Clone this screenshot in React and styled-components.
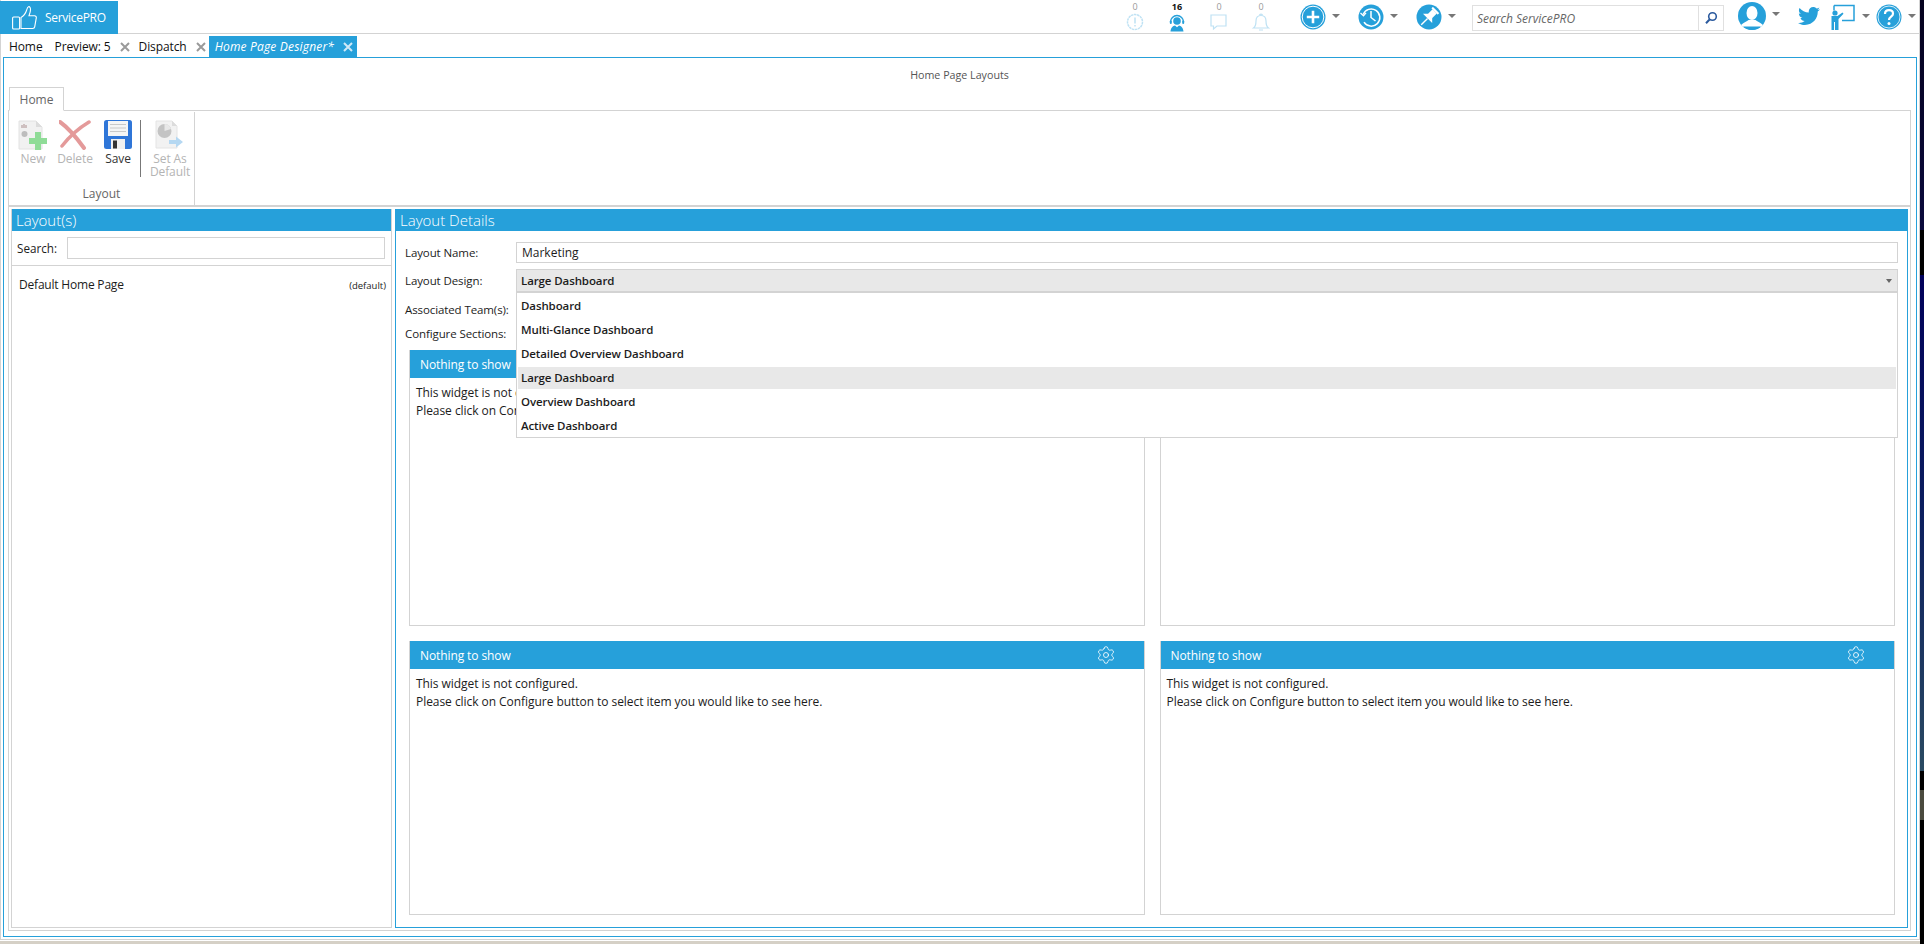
import React from "react";
import styled, { createGlobalStyle } from "styled-components";
import { Settings } from "lucide-react";
import { FaTwitter } from "react-icons/fa";

const BLUE = "#26a0da";
const GREY = "#d3d3d3";
const FONT = `"Open Sans", "Noto Sans", "Liberation Sans", sans-serif`;

const Global = createGlobalStyle`
  html, body { margin: 0; padding: 0; background: #000; }
  * { box-sizing: border-box; }
  body { font-family: ${FONT}; font-size: 12px; color: #1c1c1c; overflow: hidden; }
`;

const Screen = styled.div`
  display: flex;
  width: 1924px;
  height: 944px;
  overflow: hidden;
`;
const Desktop = styled.div`
  width: 4px;
  background: linear-gradient(180deg, #05021e 0, #0a0a3c 230px, #000 230px, #000 275px, #01015a 275px, #0a1c5e 500px, #2a4a62 771px, #000 771px, #000 790px, #4a4a3e 790px, #4a4a3e 820px, #000 820px);
`;
const Window = styled.div`
  width: 1920px;
  height: 944px;
  display: flex;
  flex-direction: column;
  background: #fff;
  border-left: 1px solid ${GREY};
  border-right: 1px solid ${GREY};
`;
const TopBar = styled.header`
  height: 34px;
  flex: none;
  display: flex;
  align-items: flex-start;
  border-bottom: 1px solid ${GREY};
  margin-left: -1px;
`;
const LogoTab = styled.div`
  width: 118px;
  height: 33px;
  margin-top: 1px;
  background: ${BLUE};
  display: flex;
  align-items: center;
  gap: 8px;
  padding-left: 12px;
  color: #fff;
  font-size: 12px;
  letter-spacing: -0.3px;
`;
const RightGroup = styled.div`
  margin-left: auto;
  display: flex;
  align-items: flex-start;
  padding-right: 3px;
`;
const Counter = styled.div`
  width: 42px;
  height: 33px;
  display: flex;
  flex-direction: column;
  align-items: center;
  padding-top: 1px;
`;
const CountValue = styled.span`
  font-size: 9px;
  line-height: 11px;
  font-weight: ${(p) => (p.$active ? 700 : 400)};
  color: ${(p) => (p.$active ? "#111" : "#999")};
`;
const Action = styled.div`
  width: ${(p) => p.$w || 58}px;
  height: 33px;
  padding-top: 4px;
  display: flex;
  align-items: flex-start;
  gap: 6px;
`;
const Caret = styled.span`
  width: 0;
  height: 0;
  flex: none;
  margin-top: 10px;
  border-left: 4px solid transparent;
  border-right: 4px solid transparent;
  border-top: 4px solid #777;
`;
const Actions = styled.div`
  display: flex;
  margin-left: 18px;
`;
const SearchBox = styled.div`
  width: 252px;
  height: 26px;
  margin-top: 5px;
  display: flex;
  border: 1px solid #e0e0e0;
`;
const SearchField = styled.div`
  flex: 1;
  padding-left: 4px;
  line-height: 26px;
  font-size: 12px;
  font-style: italic;
  color: #666;
`;
const SearchButton = styled.div`
  width: 25px;
  border-left: 1px solid #e0e0e0;
  display: flex;
  align-items: center;
  justify-content: center;
`;
const Tool = styled.div`
  display: flex;
  align-items: flex-start;
  gap: ${(p) => p.$gap ?? 6}px;
  margin-left: ${(p) => p.$ml}px;
  padding-top: ${(p) => p.$pt ?? 2}px;
`;
const TabRow = styled.nav`
  height: 23px;
  flex: none;
  display: flex;
  align-items: flex-end;
  padding-left: 8px;
`;
const Tab = styled.div`
  height: 21px;
  display: flex;
  align-items: center;
  margin-left: ${(p) => p.$ml ?? 0}px;
  margin-right: ${(p) => p.$mr ?? 0}px;
  padding: ${(p) => (p.$active ? "0 4px 0 6px" : "0")};
  background: ${(p) => (p.$active ? BLUE : "transparent")};
  color: ${(p) => (p.$active ? "#fff" : "#111")};
  font-style: ${(p) => (p.$active ? "italic" : "normal")};
  font-size: 12px;
  letter-spacing: ${(p) => (p.$active ? "0.18px" : "-0.1px")};
  white-space: nowrap;
`;
const CloseMark = styled.span`
  width: 10px;
  height: 10px;
  margin-left: 9px;
  display: inline-flex;
`;
const Content = styled.main`
  flex: 1;
  min-height: 0;
  margin: 0 2px 2px 2px;
  border: 1px solid ${BLUE};
  padding: 0 5px 5px 4px;
  display: flex;
  flex-direction: column;
`;
const Footer = styled.div`
  height: 5px;
  flex: none;
  margin: 0 -1px;
  border-top: 1px solid ${GREY};
  background: linear-gradient(180deg, #fff 0 1px, #d5d0c6 1px);
`;
const PageTitle = styled.div`
  height: 29px;
  flex: none;
  text-align: center;
  line-height: 34px;
  font-size: 10.7px;
  color: #555;
`;
const RibbonTab = styled.div`
  width: 55px;
  height: 24px;
  flex: none;
  margin-left: 1px;
  margin-bottom: -1px;
  background: #fff;
  border: 1px solid ${GREY};
  border-bottom: 1px solid #fff;
  text-align: center;
  line-height: 23px;
  font-size: 12px;
  color: #666;
  position: relative;
  z-index: 1;
`;
const Shell = styled.div`
  flex: 1;
  min-height: 0;
  border: 1px solid ${GREY};
  display: flex;
  flex-direction: column;
`;
const Ribbon = styled.div`
  height: 96px;
  flex: none;
  display: flex;
  border-bottom: 2px solid ${GREY};
`;
const RibbonGroup = styled.div`
  width: 186px;
  border-right: 1px solid ${GREY};
  display: flex;
  flex-direction: column;
  margin-top: 1px;
`;
const RibbonTools = styled.div`
  height: 74px;
  display: flex;
  align-items: flex-start;
  padding: 8px 0 0 3px;
`;
const RibbonButton = styled.div`
  width: ${(p) => p.$w}px;
  flex: none;
  display: flex;
  flex-direction: column;
  align-items: center;
  text-align: center;
  font-size: 12px;
  letter-spacing: -0.1px;
  line-height: 13px;
  color: ${(p) => (p.$disabled ? "#b4b4b4" : "#333")};
`;
const ButtonLabel = styled.span`
  margin-top: ${(p) => p.$mt ?? 2}px;
`;
const RibbonSep = styled.div`
  width: 1px;
  height: 57px;
  margin: 0 6px 0 0;
  background: #777;
`;
const GroupLabel = styled.div`
  flex: 1;
  text-align: center;
  font-size: 12px;
  line-height: 16px;
  color: #666;
`;
const Panels = styled.div`
  flex: 1;
  min-height: 0;
  display: flex;
  gap: 3px;
  padding: 2px;
`;
const LeftPanel = styled.section`
  width: 381px;
  flex: none;
  display: flex;
  flex-direction: column;
  border: 1px solid ${GREY};
  border-top: 0;
`;
const RightPanel = styled.section`
  flex: 1;
  min-width: 0;
  display: flex;
  flex-direction: column;
  border: 1px solid ${BLUE};
  border-top: 0;
`;
const PanelHeader = styled.h2`
  margin: 0;
  height: 22px;
  flex: none;
  padding-left: 4px;
  background: ${BLUE};
  color: #fff;
  font-size: 15px;
  font-weight: 300;
  line-height: 23px;
`;
const SearchRow = styled.div`
  height: 35px;
  flex: none;
  display: flex;
  align-items: center;
  padding: 6px 6px 6px 5px;
  border-bottom: 1px solid ${GREY};
  gap: 10px;
  font-size: 11.7px;
`;
const SearchInput = styled.div`
  flex: 1;
  height: 22px;
  border: 1px solid ${GREY};
`;
const ListItem = styled.div`
  display: flex;
  justify-content: space-between;
  align-items: baseline;
  margin-top: 10px;
  padding: 0 5px 0 7px;
  font-size: 12px;
  letter-spacing: -0.2px;
  line-height: 18px;
`;
const DefaultTag = styled.span`
  font-size: 9.5px;
  letter-spacing: 0;
`;
const FormRow = styled.div`
  display: flex;
  align-items: center;
  flex: none;
  height: ${(p) => p.$h}px;
  margin-top: ${(p) => p.$mt ?? 0}px;
  padding: 0 9px;
`;
const FieldLabel = styled.label`
  width: 111px;
  flex: none;
  font-size: 11.5px;
  letter-spacing: -0.1px;
`;
const TextField = styled.div`
  flex: 1;
  height: 100%;
  border: 1px solid ${GREY};
  padding-left: 5px;
  font-size: 12px;
  line-height: 19px;
`;
const SelectWrap = styled.div`
  flex: 1;
  height: 100%;
  position: relative;
`;
const SelectField = styled.div`
  height: 100%;
  display: flex;
  align-items: center;
  justify-content: space-between;
  padding: 0 4px;
  background: #e8e8e8;
  border: 1px solid ${GREY};
  font-size: 11.5px;
  letter-spacing: -0.1px;
  font-weight: 600;
`;
const SelectCaret = styled.span`
  width: 0;
  height: 0;
  margin-right: 1px;
  border-left: 3.5px solid transparent;
  border-right: 3.5px solid transparent;
  border-top: 4px solid #666;
`;
const Dropdown = styled.ul`
  position: absolute;
  left: 0;
  right: 0;
  top: 23px;
  margin: 0;
  padding: 2px 1px 0;
  list-style: none;
  background: #fff;
  border: 1px solid ${GREY};
  z-index: 5;
`;
const DropdownItem = styled.li`
  height: 22px;
  margin-bottom: 2px;
  padding-left: 3px;
  line-height: 22px;
  font-size: 11.5px;
  letter-spacing: -0.1px;
  font-weight: 600;
  background: ${(p) => (p.$selected ? "#e8e8e8" : "transparent")};
  &:last-child { margin-bottom: 0; }
`;
const CardGrid = styled.div`
  flex: 1;
  min-height: 0;
  margin-top: 5px;
  padding: 0 12px 12px 13px;
  display: grid;
  grid-template-columns: 1fr 1fr;
  grid-template-rows: 276px 1fr;
  gap: 15px;
`;
const Card = styled.article`
  border: 1px solid ${GREY};
  border-top: 0;
  display: flex;
  flex-direction: column;
`;
const CardHeader = styled.div`
  height: 28px;
  flex: none;
  display: flex;
  align-items: center;
  justify-content: space-between;
  padding: 0 28px 0 10px;
  background: ${BLUE};
  color: #fff;
  font-size: 12px;
  letter-spacing: -0.1px;
`;
const CardBody = styled.div`
  padding: 6px 6px;
  font-size: 12px;
  letter-spacing: -0.05px;
  line-height: 17.5px;
`;

const Thumb = () => (
  <svg width="25" height="24" viewBox="0 0 25 24" fill="none" stroke="#fff" strokeWidth="1.1">
    <rect x="0.6" y="11" width="7" height="12" rx="1" />
    <path d="M9 11.5c3-1.5 4.5-4 5.5-7 .5-1.500 .8-3.500 2-3.800 1.500-.3 2 1.300 2 3 0 2-.8 4-1.500 6h5.500c1.200 0 2 1 1.800 2.200l-1.600 9c-.2 1.200-1 1.600-2 1.600H9z" />
  </svg>
);
const X = ({ c = "#9a9a9a" }) => (
  <svg width="10" height="10" viewBox="0 0 10 10" stroke={c} strokeWidth="2">
    <path d="M1 1l8 8M9 1L1 9" />
  </svg>
);
const LIGHT = "#bfe2f4";
const AlertIcon = () => (
  <svg width="20" height="20" viewBox="0 0 20 20" fill="none" stroke={LIGHT} strokeWidth="1.500">
    <circle cx="10" cy="10" r="7.500" strokeDasharray="2.500 .6" />
    <path d="M10 5.500v6M10 13v1.500" />
  </svg>
);
const AgentIcon = () => (
  <svg width="20" height="20" viewBox="0 0 20 20">
    <path d="M3.500 10a6.500 6.500 0 0 1 13 0" fill="none" stroke={BLUE} strokeWidth="1.400" />
    <circle cx="10" cy="9" r="3.800" fill={BLUE} />
    <rect x="2.800" y="8.500" width="2" height="3.500" rx="1" fill={BLUE} />
    <rect x="15.200" y="8.500" width="2" height="3.500" rx="1" fill={BLUE} />
    <path d="M3.500 19.500c.3-3.500 2.500-5.800 4.500-6l2 1.700 2-1.700c2 .2 4.200 2.500 4.500 6z" fill={BLUE} />
  </svg>
);
const ChatIcon = () => (
  <svg width="20" height="20" viewBox="0 0 20 20" fill="none" stroke={LIGHT} strokeWidth="1.200">
    <path d="M2 3h15v11H8l-3.500 3v-3H2z" />
  </svg>
);
const BellIcon = () => (
  <svg width="20" height="20" viewBox="0 0 20 20" fill="none" stroke={LIGHT} strokeWidth="1.200">
    <path d="M2.500 16c2-1.500 2.500-3 2.500-7 0-3.500 2-5.500 5-5.500s5 2 5 5.500c0 4 .5 5.500 2.500 7z" />
    <path d="M8.500 3.500c0-1.800 3-1.800 3 0M8 18h4" />
  </svg>
);
const PlusCircle = () => (
  <svg width="26" height="26" viewBox="0 0 26 26" fill="none">
    <circle cx="13" cy="13" r="12.500" fill={BLUE} />
    <circle cx="13" cy="13" r="10.800" stroke="#fff" strokeWidth="1" />
    <path d="M13 6.800v12.400M6.800 13h12.400" stroke="#fff" strokeWidth="2.600" />
  </svg>
);
const HistoryCircle = () => (
  <svg width="26" height="26" viewBox="0 0 26 26" fill="none">
    <circle cx="13" cy="13" r="12.500" fill={BLUE} />
    <path d="M5.200 10.500A8.600 8.600 0 1 1 6 18.200" stroke="#fff" strokeWidth="1.500" />
    <path d="M2.500 9l3 2.800L8 8.800" stroke="#fff" strokeWidth="1.300" />
    <path d="M13 7v6.500l4.500 3.500" stroke="#fff" strokeWidth="1.500" />
  </svg>
);
const PinCircle = () => (
  <svg width="26" height="26" viewBox="0 0 26 26" fill="none">
    <circle cx="13" cy="13" r="12.500" fill={BLUE} />
    <g transform="rotate(45 13 13)" fill="#fff">
      <rect x="8.500" y="3" width="9" height="2.200" rx=".6" />
      <rect x="10" y="5" width="6" height="7" />
      <path d="M10 11.500h6l3.500 3.500h-13z" />
      <rect x="12.300" y="15" width="1.400" height="9" />
    </g>
  </svg>
);
const Lens = () => (
  <svg width="14" height="14" viewBox="0 0 14 14" fill="none" stroke="#2b5a9e" strokeWidth="1.600">
    <circle cx="8.500" cy="5.500" r="3.800" />
    <path d="M5.800 8.300L2 12.200" strokeWidth="2" />
  </svg>
);
const UserCircle = () => (
  <svg width="28" height="28" viewBox="0 0 28 28">
    <circle cx="14" cy="14" r="14" fill={BLUE} />
    <ellipse cx="14" cy="11" rx="5.500" ry="7" fill="#fff" />
    <path d="M3 23c3-3 6-3.500 7.500-5h7c1.500 1.500 4.500 2 7.500 5l-2 2H5z" fill="#fff" />
    <path d="M5 24.500a13.800 13.800 0 0 0 18 0z" fill={BLUE} />
  </svg>
);
const Presenter = () => (
  <svg width="24" height="26" viewBox="0 0 24 26" fill="none">
    <path d="M3 1.500h20v15H11" stroke={BLUE} strokeWidth="1.500" />
    <path d="M3 1.500v5" stroke={BLUE} strokeWidth="1.500" />
    <circle cx="4" cy="9" r="2.600" fill={BLUE} />
    <path d="M.5 12h6l5-3.500 1 1.300-5 5.200V26H4v-8H3v8H.5z" fill={BLUE} />
  </svg>
);
const HelpCircle = () => (
  <svg width="26" height="26" viewBox="0 0 26 26" fill="none">
    <circle cx="13" cy="13" r="12.500" fill={BLUE} />
    <circle cx="13" cy="13" r="11" stroke="#fff" strokeWidth=".8" />
    <path d="M9 10c0-2.500 1.800-3.800 4-3.800s4 1.300 4 3.500c0 3-4 3-4 6.300" stroke="#fff" strokeWidth="2.200" />
    <circle cx="13" cy="19.500" r="1.500" fill="#fff" />
  </svg>
);
const NewIcon = () => (
  <svg width="30" height="32" viewBox="0 0 30 32">
    <path d="M1 1h17l6 6v22H1z" fill="#f1f1f1" stroke="#e2e2e2" />
    <path d="M18 1v6h6z" fill="#dcdcdc" />
    <path d="M4 8V5M6 8V4M8 8V5" stroke="#b8a0a0" strokeWidth="1.200" />
    <circle cx="6.500" cy="14" r="3" fill="#bdbdbd" />
    <path d="M17 12h6v6h6v6h-6v6h-6v-6h-6v-6h6z" fill="#8fdc97" />
  </svg>
);
const DeleteIcon = () => (
  <svg width="32" height="30" viewBox="0 0 32 30" fill="none" stroke="#e49a9a">
    <path d="M1 2c7 5 16 15 24 26" strokeWidth="4" strokeLinecap="round" />
    <path d="M30 2C20 8 10 17 3 26" strokeWidth="3.500" strokeLinecap="round" />
  </svg>
);
const SaveIcon = () => (
  <svg width="28" height="30" viewBox="0 0 28 30">
    <rect x="0" y="0" width="28" height="29" rx="2.500" fill="#2f76d8" />
    <rect x="4" y="1" width="20" height="15" fill="#f5f5f5" />
    <path d="M6 4.500h16M6 8h16M6 11.500h16" stroke="#c9c9c9" />
    <rect x="7" y="19" width="14" height="10" fill="#f0f0f0" />
    <rect x="9" y="20.500" width="4" height="8" fill="#333" />
  </svg>
);
const SetDefaultIcon = () => (
  <svg width="30" height="30" viewBox="0 0 30 30">
    <path d="M1 1h16l5 5v22H1z" fill="#f2f2f2" stroke="#e4e4e4" />
    <path d="M17 1v5h5z" fill="#dcdcdc" />
    <circle cx="9.500" cy="11" r="7" fill="#c4c4c4" />
    <path d="M9.500 11V4a7 7 0 0 1 6.500 5z" fill="#e8e8e8" />
    <path d="M14 20h7v-3.500l7 5.500-7 5.500V24h-7z" fill="#b5d8f2" />
  </svg>
);
const Gear = styled(Settings)`
  flex: none;
`;

const LayoutItems = ["Dashboard", "Multi-Glance Dashboard", "Detailed Overview Dashboard", "Large Dashboard", "Overview Dashboard", "Active Dashboard"];

const Widget = () => (
  <Card>
    <CardHeader>
      <span>Nothing to show</span>
      <Gear size={20} strokeWidth={1} color="#fff" />
    </CardHeader>
    <CardBody>
      This widget is not configured.
      <br />
      Please click on Configure button to select item you would like to see here.
    </CardBody>
  </Card>
);

export default function App() {
  return (
    <Screen>
      <Global />
      <Window>
        <TopBar>
          <LogoTab>
            <Thumb />
            <span>ServicePRO</span>
          </LogoTab>
          <RightGroup>
            <Counter><CountValue>0</CountValue><AlertIcon /></Counter>
            <Counter><CountValue $active>16</CountValue><AgentIcon /></Counter>
            <Counter><CountValue>0</CountValue><ChatIcon /></Counter>
            <Counter><CountValue>0</CountValue><BellIcon /></Counter>
            <Actions>
              <Action><PlusCircle /><Caret /></Action>
              <Action><HistoryCircle /><Caret /></Action>
              <Action $w={56}><PinCircle /><Caret /></Action>
            </Actions>
            <SearchBox>
              <SearchField>Search ServicePRO</SearchField>
              <SearchButton><Lens /></SearchButton>
            </SearchBox>
            <Tool $ml={14}><UserCircle /><Caret /></Tool>
            <Tool $ml={18} $pt={5}><FaTwitter size={22} color={BLUE} /></Tool>
            <Tool $ml={11} $gap={7} $pt={4}><Presenter /><Caret /></Tool>
            <Tool $ml={6} $pt={4}><HelpCircle /><Caret /></Tool>
          </RightGroup>
        </TopBar>
        <TabRow>
          <Tab $mr={12}>Home</Tab>
          <Tab>Preview: 5<CloseMark><X /></CloseMark></Tab>
          <Tab $ml={9} $mr={3}>Dispatch<CloseMark><X /></CloseMark></Tab>
          <Tab $active>Home Page Designer*<CloseMark><X c="#cfe9f7" /></CloseMark></Tab>
        </TabRow>
        <Content>
          <PageTitle>Home Page Layouts</PageTitle>
          <RibbonTab>Home</RibbonTab>
          <Shell>
            <Ribbon>
              <RibbonGroup>
                <RibbonTools>
                  <RibbonButton $w={42} $disabled><NewIcon /><ButtonLabel $mt={0}>New</ButtonLabel></RibbonButton>
                  <RibbonButton $w={42} $disabled><DeleteIcon /><ButtonLabel>Delete</ButtonLabel></RibbonButton>
                  <RibbonButton $w={44}><SaveIcon /><ButtonLabel>Save</ButtonLabel></RibbonButton>
                  <RibbonSep />
                  <RibbonButton $w={46} $disabled><SetDefaultIcon /><ButtonLabel>Set As<br />Default</ButtonLabel></RibbonButton>
                </RibbonTools>
                <GroupLabel>Layout</GroupLabel>
              </RibbonGroup>
            </Ribbon>
            <Panels>
              <LeftPanel>
                <PanelHeader>Layout(s)</PanelHeader>
                <SearchRow>
                  <span>Search:</span>
                  <SearchInput />
                </SearchRow>
                <ListItem>
                  <span>Default Home Page</span>
                  <DefaultTag>(default)</DefaultTag>
                </ListItem>
              </LeftPanel>
              <RightPanel>
                <PanelHeader>Layout Details</PanelHeader>
                <FormRow $h={21} $mt={11}>
                  <FieldLabel>Layout Name:</FieldLabel>
                  <TextField>Marketing</TextField>
                </FormRow>
                <FormRow $h={23} $mt={6}>
                  <FieldLabel>Layout Design:</FieldLabel>
                  <SelectWrap>
                    <SelectField>Large Dashboard<SelectCaret /></SelectField>
                    <Dropdown>
                      {LayoutItems.map((item) => (
                        <DropdownItem key={item} $selected={item === "Large Dashboard"}>{item}</DropdownItem>
                      ))}
                    </Dropdown>
                  </SelectWrap>
                </FormRow>
                <FormRow $h={24} $mt={5}><FieldLabel>Associated Team(s):</FieldLabel></FormRow>
                <FormRow $h={24}><FieldLabel>Configure Sections:</FieldLabel></FormRow>
                <CardGrid>
                  <Widget />
                  <Widget />
                  <Widget />
                  <Widget />
                </CardGrid>
              </RightPanel>
            </Panels>
          </Shell>
        </Content>
        <Footer />
      </Window>
      <Desktop />
    </Screen>
  );
}
